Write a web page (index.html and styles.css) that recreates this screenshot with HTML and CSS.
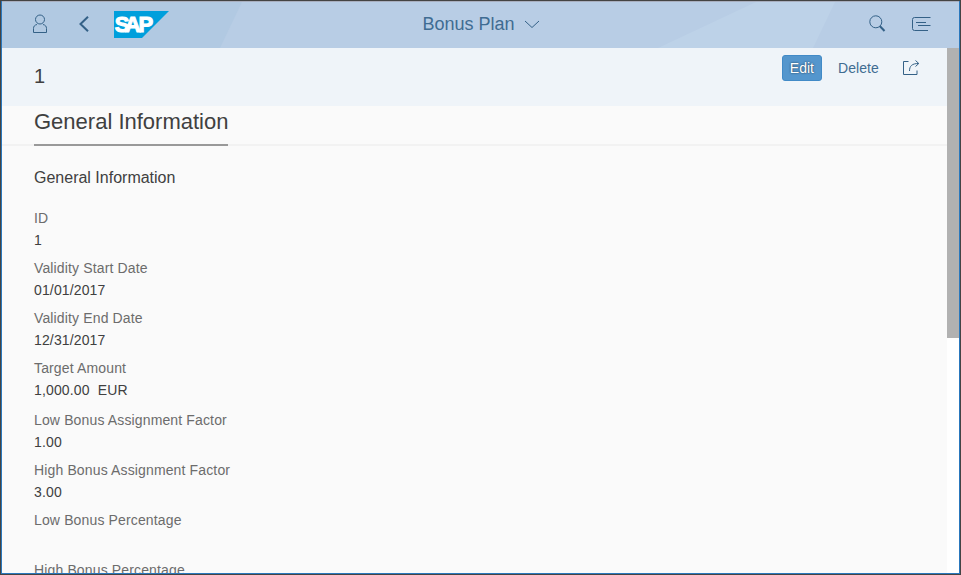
FILE: index.html
```html
<!DOCTYPE html>
<html lang="en">
<head>
<meta charset="utf-8">
<title>Bonus Plan</title>
<link rel="stylesheet" href="styles.css">
</head>
<body>
<div class="window">
  <header class="shell">
    <svg class="shell-bg" viewBox="0 0 957 46" preserveAspectRatio="none" aria-hidden="true">
      <path d="M0 0H240L218 46H0Z" fill="#b1c9e2"/>
      <path d="M754 0H833L811 46H656Z" fill="#bdd2e8"/>
    </svg>
    <div class="shell-left">
      <svg class="icon-user" width="16" height="20" viewBox="0 0 16 20"><circle cx="8" cy="5.500" r="4.500"/><path d="M5 10.500C2.500 11 1.500 12.500 1.500 14.500V18.500H14.500V14.500C14.500 12.500 13.500 11 11 10.500"/></svg>
      <svg class="icon-back" width="10" height="16" viewBox="0 0 10 16"><path d="M9 .8 1.500 8 9 15.200"/></svg>
      <svg class="logo" width="55" height="27" viewBox="0 0 55 27"><path d="M0 0H55L28 27H0Z" fill="#009fdc"/><text x="0.800 10.800 24.600" y="21.300">SAP</text></svg>
    </div>
    <div class="shell-title"><span>Bonus Plan</span><svg width="16" height="9" viewBox="0 0 16 9"><path d="M1 1 8 7.500 15 1"/></svg></div>
    <div class="shell-right">
      <svg width="17" height="18" viewBox="0 0 17 18"><circle cx="6.800" cy="6.800" r="6"/><path d="M11 11.200 15.500 16" stroke-width="2"/></svg>
      <svg width="19" height="16" viewBox="0 0 19 16"><path d="M18.500 1.500H2.500Q.5 1.500.5 3.500V12.500Q.5 14.500 2.500 14.500H16M4 6.500H14M6 9.500H18.500"/></svg>
    </div>
  </header>
  <div class="body">
    <main class="page">
      <div class="object-header">
        <h1>1</h1>
        <div class="actions">
          <button class="edit">Edit</button>
          <button class="delete">Delete</button>
          <svg width="17" height="16" viewBox="0 0 17 16"><path d="M5.500 1.500H.5V14.500H14V10.500M6.500 11C6.500 6 9 3.500 15.500 3.500M12.500.500 15.800 3.500 12.500 6.500"/></svg>
        </div>
      </div>
      <nav class="anchor-bar"><span>General Information</span></nav>
      <section class="form">
        <h2>General Information</h2>
        <dl>
          <div class="field"><dt>ID</dt><dd>1</dd></div>
          <div class="field"><dt>Validity Start Date</dt><dd>01/01/2017</dd></div>
          <div class="field"><dt>Validity End Date</dt><dd>12/31/2017</dd></div>
          <div class="field amount"><dt>Target Amount</dt><dd>1,000.00&nbsp; EUR</dd></div>
          <div class="field"><dt>Low Bonus Assignment Factor</dt><dd>1.00</dd></div>
          <div class="field"><dt>High Bonus Assignment Factor</dt><dd>3.00</dd></div>
          <div class="field"><dt>Low Bonus Percentage</dt><dd></dd></div>
          <div class="field"><dt>High Bonus Percentage</dt><dd></dd></div>
        </dl>
      </section>
    </main>
    <div class="scrollbar"><div class="thumb"></div></div>
  </div>
</div>
</body>
</html>
```
FILE: styles.css
```css
* { box-sizing: border-box; }
body { margin: 0; font-family: "Liberation Sans", Arial, sans-serif; color: #404040; }
.window {
  width: 961px; height: 575px; overflow: hidden;
  display: flex; flex-direction: column;
  border: 1px solid #444;
  box-shadow: inset 0 0 0 1px #2a78bd;
  padding: 0 1px 1px;
}
.shell {
  position: relative; flex: none; height: 47px; padding-bottom: 2px;
  display: grid; grid-template-columns: 1fr auto 1fr; align-items: center;
  background: #b8cde5; border-top: 1px solid #a9afbf;
}
svg { display: block; flex: none; fill: none; stroke: #346187; }
.shell-bg { position: absolute; inset: 0; width: 100%; height: 100%; stroke: none; }
.shell-left, .shell-title, .shell-right { position: relative; display: flex; align-items: center; }
.shell-left { padding-left: 30px; }
.icon-back { margin-left: 31px; stroke-width: 2; }
.logo { margin-left: 25px; stroke: none; }
.logo text { font: bold 22px "Liberation Sans", Arial, sans-serif; fill: #fff; stroke: #fff; stroke-width: 1.1px; }
.shell-title { font-size: 18px; color: #3f6c92; gap: 9px; padding-left: 1px; }
.shell-right { justify-content: flex-end; gap: 26px; padding-right: 28px; }
.body { flex: 1; min-height: 0; display: flex; }
.page { flex: 1; background: #fafafa; overflow: hidden; }
.object-header {
  height: 58px; padding: 7px 27px 0 32px; background: #eff4f9;
  display: flex; justify-content: space-between; align-items: flex-start;
}
h1 { margin: 8px 0 0; font-size: 20px; line-height: 26px; font-weight: 400; }
.actions { display: flex; align-items: center; }
button { height: 26px; padding: 0; border: 0; background: none; font: 14px "Liberation Sans", Arial, sans-serif; color: #3f6c92; }
.edit { width: 40px; background: #5496cd; border: 1px solid #418ac7; border-radius: 3px; color: #fff; text-shadow: 0 0 2px rgba(0,0,0,.7); }
.delete { margin: 0 24px 0 16px; letter-spacing: .1px; }
.anchor-bar { height: 40px; padding-left: 32px; border-bottom: 2px solid #f2f2f2; }
.anchor-bar span { display: inline-block; height: 40px; font-size: 22px; line-height: 32px; border-bottom: 2px solid #999; }
.form { padding: 22px 32px 0; }
h2 { margin: 0; font-size: 16px; line-height: 20px; font-weight: 400; }
dl { margin: 19px 0 0; font-size: 14px; letter-spacing: .14px; }
.field { height: 50px; }
.amount { height: 52px; }
dt { line-height: 22px; color: #6c6c6c; }
dd { margin: 0; line-height: 22px; }
.scrollbar { width: 12px; background: #fff; }
.thumb { height: 290px; background: #b1b1b1; }
```
